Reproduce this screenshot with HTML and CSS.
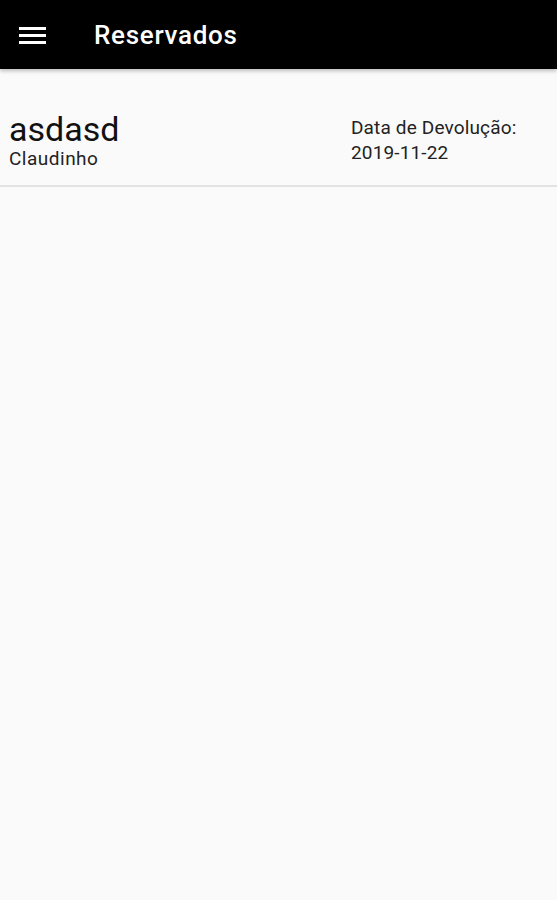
FILE: index.html
```html
<!DOCTYPE html>
<html lang="pt-BR">
<head>
	<meta charset="UTF-8">
	<title>Reservados</title>
	<meta name="viewport" content="width=device-width, initial-scale=1">
	<link rel="stylesheet" href="styles.css">
</head>
<body>
<header class="app-bar">
	<button class="menu-button" type="button" aria-label="Menu">
		<svg width="28" height="20" viewBox="0 0 28 20" aria-hidden="true">
			<rect x="0" y="1" width="27" height="3" fill="#fff"/>
			<rect x="0" y="8" width="27" height="3" fill="#fff"/>
			<rect x="0" y="15" width="27" height="3" fill="#fff"/>
		</svg>
	</button>
	<h1 class="app-title">Reservados</h1>
</header>

<main>
	<ul class="reserve-list">
		<li class="reserve-item">
			<div class="reserve-main">
				<span class="reserve-title">asdasd</span>
				<span class="reserve-user">Claudinho</span>
			</div>
			<div class="reserve-date">
				<span>Data de Devolução:</span>
				<span>2019-11-22</span>
			</div>
		</li>
	</ul>
</main>
</body>
</html>
```

FILE: styles.css
```css
*,
::before,
::after {
	box-sizing: border-box;
}
html,
body {
	height: 100%;
}
body {
	margin: 0;
	background: #fafafa;
	font-family: Roboto, "Liberation Sans", sans-serif;
	color: #1a1a1a;
}
.app-bar {
	height: 69px;
	display: flex;
	align-items: center;
	gap: 47px;
	padding-inline: 19px;
	background: #000;
	color: #fff;
	box-shadow: 0 2px 4px rgba(0, 0, 0, 0.25);
}
.menu-button {
	display: flex;
	padding: 0;
	margin-top: 2px;
	border: 0;
	background: none;
}
.app-title {
	margin: 0;
	font-size: 26px;
	font-weight: 500;
	letter-spacing: 0.7px;
}
.reserve-list {
	margin: 0;
	padding: 0;
	list-style-type: "";
}
.reserve-item {
	display: flex;
	justify-content: space-between;
	padding: 41px 0 15px 9px;
	border-bottom: 2px solid #e3e3e3;
}
.reserve-main,
.reserve-date {
	display: flex;
	flex-direction: column;
}
.reserve-title {
	font-size: 34px;
	line-height: 38px;
	color: #111;
}
.reserve-user {
	font-size: 19px;
	line-height: 22px;
	letter-spacing: 0.5px;
	color: #222;
}
.reserve-date {
	width: 206px;
	padding-top: 5px;
	font-size: 19px;
	line-height: 25px;
	letter-spacing: 0.15px;
	color: #222;
}
```
